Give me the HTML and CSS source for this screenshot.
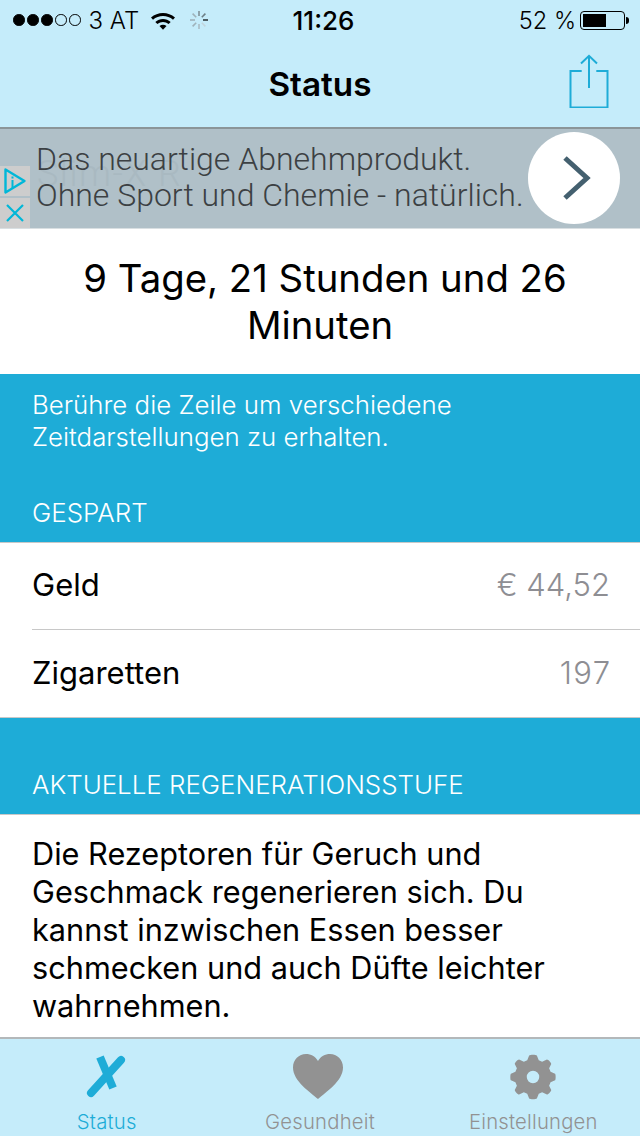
FILE: index.html
```html
<!DOCTYPE html>
<html lang="de">
<head>
<meta charset="utf-8">
<title>Status</title>
<link rel="stylesheet" href="styles.css">
</head>
<body>
<div class="app">
  <header class="top">
    <div class="statusbar">
      <div class="sb-left">
        <span class="signal"><i class="on"></i><i class="on"></i><i class="on"></i><i></i><i></i></span>
        <span class="carrier">3 AT</span>
        <svg class="wifi" viewBox="0 0 26 19" width="26" height="19"><path d="M1 6.6C7.6.6 18.400.6 25 6.600L23 8.700C17.500 3.800 8.500 3.800 3 8.700Z" fill="#000"/><path d="M5.300 10.900C9.700 6.900 16.300 6.900 20.700 10.900L18.600 13C15.300 10.200 10.700 10.200 7.400 13Z" fill="#000"/><path d="M9.500 15C11.600 13.200 14.400 13.200 16.500 15L13 18.800Z" fill="#000"/></svg>
        <svg class="spinner" viewBox="0 0 20 20" width="20" height="20" stroke-width="1.600" stroke-linecap="butt">
          <path d="M10 1V6" stroke="#7f9299"/><path d="M16.400 3.600L12.800 7.200" stroke="#6d7f86"/><path d="M19 10H14" stroke="#2f3a3e"/><path d="M16.400 16.400L12.800 12.800" stroke="#c3d6de"/><path d="M10 19V14" stroke="#a9bcc4"/><path d="M3.600 16.400L7.200 12.800" stroke="#9fb2ba"/><path d="M1 10H6" stroke="#9fb2ba"/><path d="M3.600 3.600L7.200 7.200" stroke="#9fb2ba"/>
        </svg>
      </div>
      <div class="sb-time">11:26</div>
      <div class="sb-right">
        <span class="pct">52 %</span>
        <span class="battery"><span class="battery-level"></span></span><span class="battery-tip"></span>
      </div>
    </div>
    <div class="navbar">
      <h1 class="nav-title">Status</h1>
      <svg class="share" viewBox="0 0 40 54" width="40" height="54" fill="none" stroke="#1eacd7" stroke-width="2"><path d="M12.700 17H1.500V53.500H38.500V17H27.300"/><path d="M20 34V2"/><path d="M12 9.500L20 1.800L28 9.500"/></svg>
    </div>
  </header>

  <a class="ad">
    <span class="ad-ghost">Slim-X R</span>
    <span class="ad-badges">
      <span class="ad-badge">
        <svg viewBox="0 0 24 28" width="24" height="28" fill="none" stroke="#00b7d8" stroke-width="2.400"><path d="M2.500 2.500L21.500 14L2.500 25.500Z" stroke-linejoin="round"/><path d="M9.500 13V21M9.500 9.500V11.500" stroke-width="2"/></svg>
      </span>
      <span class="ad-badge">
        <svg viewBox="0 0 20 20" width="20" height="20" fill="none" stroke="#00b7d8" stroke-width="2.200"><path d="M2 2L18 18M18 2L2 18"/></svg>
      </span>
    </span>
    <span class="ad-text">Das neuartige Abnehmprodukt.<br>Ohne Sport und Chemie - natürlich.</span>
    <span class="ad-button">
      <svg viewBox="0 0 30 46" width="30" height="46" fill="none" stroke="#44606f" stroke-width="5"><path d="M3 3L25 23L3 43"/></svg>
    </span>
  </a>

  <main class="content">
    <section class="elapsed">9 Tage, 21 Stunden und 26 Minuten</section>

    <section class="band band-hint">
      <p class="hint">Berühre die Zeile um verschiedene Zeitdarstellungen zu erhalten.</p>
      <h2 class="section-head">GESPART</h2>
    </section>

    <section class="list">
      <div class="row"><span>Geld</span><span class="value">€ 44,52</span></div>
      <div class="row"><span>Zigaretten</span><span class="value">197</span></div>
    </section>

    <section class="band band-head">
      <h2 class="section-head">AKTUELLE REGENERATIONSSTUFE</h2>
    </section>

    <section class="regen">Die Rezeptoren für Geruch und Geschmack regenerieren sich. Du kannst inzwischen Essen besser schmecken und auch Düfte leichter wahrnehmen.</section>
  </main>

  <nav class="tabbar">
    <div class="tab tab-active">
      <svg class="tab-icon" viewBox="0 0 44 48" width="44" height="48"><path d="M6 40L36 7" stroke="#1eacd7" stroke-width="8" stroke-linecap="round" fill="none"/><path d="M15 4L28 35" stroke="#1eacd7" stroke-width="8" fill="none"/></svg>
      <span>Status</span>
    </div>
    <div class="tab">
      <svg class="tab-icon tab-icon-heart" viewBox="0 0 52 48" width="52" height="48"><path d="M26 46C18 39 1 28 1 14.500C1 6.500 7 1 14 1C19 1 23.500 3.500 26 8C28.500 3.500 33 1 38 1C45 1 51 6.500 51 14.500C51 28 34 39 26 46Z" fill="#929292"/></svg>
      <span>Gesundheit</span>
    </div>
    <div class="tab">
      <svg class="tab-icon" viewBox="-1 -1 50 50" width="48" height="48"><path fill-rule="evenodd" fill="#929292" d="M20 1.500C21 .5 27 .5 28 1.500L30 6.500L33.500 8L38.500 5.800C40 5.800 43 9 43 10.500L40.800 15L42.300 18.500L47 20.500C47.800 21.500 47.800 26.500 47 27.500L42.300 29.500L40.800 33L43 37.500C43 39 40 42.200 38.500 42.200L33.500 40L30 41.500L28 46.500C27 47.500 21 47.500 20 46.500L18 41.500L14.500 40L9.500 42.200C8 42.200 5 39 5 37.500L7.200 33L5.700 29.500L1 27.500C.2 26.500 .2 21.500 1 20.500L5.700 18.500L7.200 15L5 10.500C5 9 8 5.800 9.500 5.800L14.500 8L18 6.500ZM24 17.500A6.500 6.500 0 1 0 24 30.500A6.500 6.500 0 1 0 24 17.500Z"/></svg>
      <span>Einstellungen</span>
    </div>
  </nav>
</div>
</body>
</html>
```
FILE: styles.css
```css
* { box-sizing: border-box; }
html, body { margin: 0; padding: 0; }
body { font-family: Inter, "Liberation Sans", sans-serif; background: #fff; color: #000; }
.app { width: 640px; height: 1136px; display: flex; flex-direction: column; overflow: hidden; }

.top { height: 129px; background: #c5ecfa; border-bottom: 2px solid #8b9598; flex: none; }
.statusbar { height: 40px; display: grid; grid-template-columns: 1fr auto 1fr; align-items: center; padding: 0 11px 0 13px; font-size: 24px; font-weight: 300; }
.sb-left { display: flex; align-items: center; }
.signal { display: flex; gap: 2.500px; }
.signal i { width: 11.500px; height: 11.500px; border-radius: 50%; border: 1px solid #000; display: block; }
.signal i.on { background: #000; }
.carrier { margin-left: 8px; }
.wifi { margin-left: 11px; }
.spinner { margin-left: 13px; }
.sb-time { font-size: 26px; font-weight: 500; margin-left: 5px; }
.sb-right { display: flex; align-items: center; justify-content: flex-end; }
.pct { margin-right: 4px; font-size: 23.600px; }
.battery { width: 45px; height: 19px; border: 1.500px solid #000; border-radius: 4px; padding: 2px; display: block; }
.battery-level { display: block; width: 23px; height: 100%; background: #000; }
.battery-tip { width: 3px; height: 7px; background: #000; border-radius: 0 3px 3px 0; margin-left: 1px; }

.navbar { height: 87px; position: relative; display: flex; align-items: center; justify-content: center; }
.nav-title { margin: 0; font-size: 33.300px; font-weight: 600; }
.share { position: absolute; right: 31px; top: 14px; }

.ad { height: 100px; flex: none; background: #b0c0c8; border-bottom: 1px solid #d9dfe2; position: relative; display: flex; align-items: center; justify-content: space-between; padding: 0 20px 0 36px; }
.ad-ghost { position: absolute; left: 37px; top: 24px; font-family: Roboto, sans-serif; font-weight: 300; font-size: 36px; letter-spacing: 1.500px; color: #a9b9c1; }
.ad-text { position: relative; font-family: Roboto, sans-serif; font-weight: 300; font-size: 32px; line-height: 36px; color: #3c4043; white-space: nowrap; margin-top: -4px; }
.ad-button { position: relative; width: 92px; height: 92px; border-radius: 50%; background: #fff; display: flex; align-items: center; justify-content: center; padding-left: 6px; margin-top: -1px; }
.ad-badges { position: absolute; left: 0; top: 37px; width: 30px; display: flex; flex-direction: column; gap: 2px; }
.ad-badge { height: 30px; background: #cdcdcd; display: flex; align-items: center; justify-content: center; }

.content { flex: 1; display: flex; flex-direction: column; min-height: 0; }
.elapsed { height: 145px; flex: none; background: #fff; text-align: center; padding: 26px 60px 0; font-size: 38.300px; line-height: 47px; font-weight: 400; text-indent: 10px; }

.band { background: #1eacd7; color: #fff; flex: none; padding: 0 32px; position: relative; }
.band-hint { height: 169px; padding-top: 15px; border-bottom: 1px solid #c8c8c8; }
.hint { margin: 0; font-size: 25.850px; line-height: 32px; font-weight: 300; }
.section-head { margin: 0; font-size: 25.900px; font-weight: 300; line-height: 30px; }
.band-hint .section-head { margin-top: 45px; }
.band-head { height: 97px; padding-top: 52px; border-bottom: 1px solid #c8c8c8; }

.list { flex: none; background: #fff; padding-left: 32px; }
.row { height: 87px; display: flex; align-items: center; justify-content: space-between; padding: 0 30px 3px 0; font-size: 31px; font-weight: 400; border-bottom: 1px solid #c8c8c8; }
.row + .row { height: 88px; margin-left: -32px; padding: 0 30px 2px 32px; }
.value { color: #8e8e93; font-weight: 300; }
.row + .row .value { letter-spacing: 1.300px; margin-right: -1.300px; }

.regen { flex: 1; background: #fff; padding: 20px 30px 0 32px; font-size: 30.700px; line-height: 38px; font-weight: 400; overflow: hidden; }

.tabbar { height: 99px; flex: none; background: #c5ecfa; border-top: 2px solid #b3b8ba; display: grid; grid-template-columns: repeat(3, 1fr); }
.tab { display: flex; flex-direction: column; align-items: center; color: #929292; font-size: 20.300px; line-height: 24px; font-weight: 300; letter-spacing: .2px; padding-top: 14px; }
.tab-icon { display: block; height: 48px; margin-bottom: 9px; }
.tab-icon-heart { margin-left: -4px; }
.tab-active { color: #1eacd7; }
```
